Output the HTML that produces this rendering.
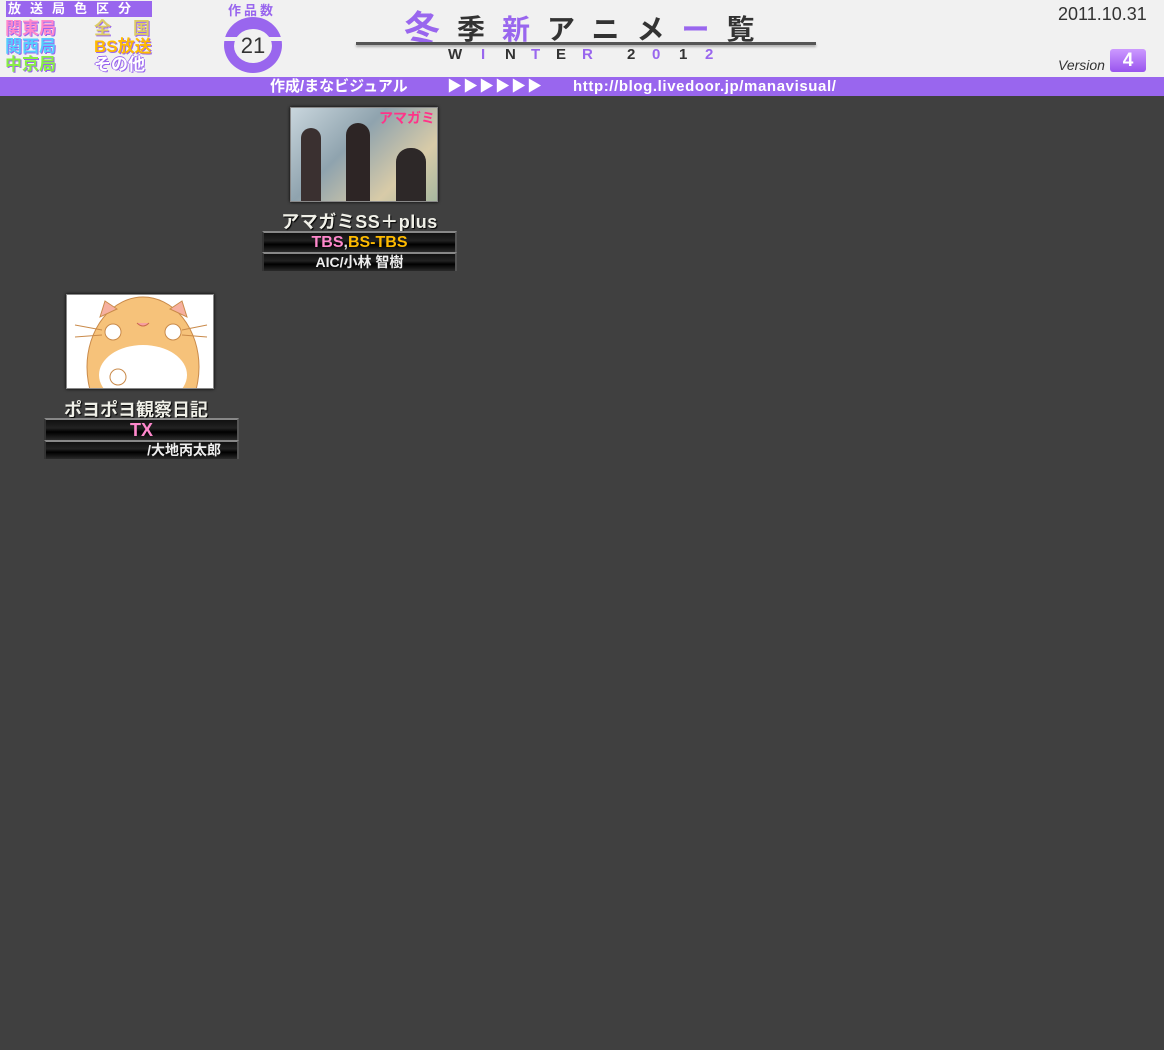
<!DOCTYPE html>
<html><head><meta charset="utf-8"><style>
*{margin:0;padding:0;box-sizing:border-box}
body{width:1164px;height:1050px;background:#404040;position:relative;overflow:hidden;font-family:"Liberation Sans","Noto Sans CJK JP",sans-serif}
.a{position:absolute}
.hdr{left:0;top:0;width:1164px;height:77px;background:#f1f1f1}
.bar{left:0;top:77px;width:1164px;height:19px;background:#9966ee;color:#fff;font-size:15px;font-weight:bold;line-height:19px}
.t{font-weight:bold;white-space:nowrap}
.lg{font-size:17px;line-height:18px;font-weight:bold;white-space:nowrap;position:absolute}
.ttl{position:absolute;color:#f0f0e8;font-weight:bold;font-size:18px;text-align:center;text-shadow:1px 1px 1px #000;white-space:nowrap}
.row{position:absolute;background:linear-gradient(#111,#222 40%,#000 60%,#2a2a2a);border-top:2px solid #888;border-left:2px solid #333;border-right:2px solid #555;text-align:center;font-weight:bold;white-space:nowrap}
.w{position:absolute;top:46px;font-size:15px;font-weight:bold;color:#333}
.p{color:#9966ee}
</style></head><body>
<div class="a hdr"></div>
<div class="a t" style="left:6px;top:1px;width:146px;height:16px;background:#9966ee;color:#fff;font-size:13px;line-height:16px;letter-spacing:9px;padding-left:2px">放送局色区分</div>
<div class="lg" style="left:5px;top:20px;color:#ff88cc;text-shadow:1px 1px 0 #9966ee">関東局</div>
<div class="lg" style="left:5px;top:38px;color:#55ccff;text-shadow:1px 1px 0 #9966ee">関西局</div>
<div class="lg" style="left:5px;top:56px;color:#88ee44;text-shadow:1px 1px 0 #9966ee">中京局</div>
<div class="lg" style="left:94px;top:20px;color:#ddcc66;letter-spacing:22px;text-shadow:1px 1px 0 #9966ee">全国</div>
<div class="lg" style="left:94px;top:38px;color:#ffbb00;text-shadow:1px 1px 0 #9966ee">BS放送</div>
<div class="lg" style="left:94px;top:56px;color:#fff;text-shadow:1px 1px 0 #9966ee,-1px 0 0 #9966ee,0 -1px 0 #9966ee">その他</div>
<div class="a t" style="left:228px;top:0px;font-size:13px;color:#9966ee;letter-spacing:3px">作品数</div>
<div class="a" style="left:224px;top:17px;width:58px;height:56px;border-radius:50%;background:#9966ee"></div>
<div class="a" style="left:218px;top:37px;width:70px;height:4px;background:#f1f1f1"></div>
<div class="a" style="left:234px;top:29px;width:38px;height:34px;border-radius:50%;background:#f1f1f1;text-align:center;font-size:22px;line-height:34px;color:#333">21</div>
<div class="a t" style="left:404px;top:0px;font-size:36px;color:#9966ee">冬</div>
<div class="a t" style="left:457px;top:8px;font-size:28px;color:#333;letter-spacing:17px">季<span class="p">新</span>アニメ<span class="p">ー</span>覧</div>
<div class="a" style="left:356px;top:42px;width:460px;height:3px;background:#555;box-shadow:0 2px 2px #aaa"></div>
<span class="w" style="left:448px">W</span><span class="w p" style="left:481px">I</span><span class="w" style="left:505px">N</span><span class="w p" style="left:531px">T</span><span class="w" style="left:556px">E</span><span class="w p" style="left:582px">R</span><span class="w" style="left:627px">2</span><span class="w p" style="left:652px">0</span><span class="w" style="left:679px">1</span><span class="w p" style="left:705px">2</span>
<div class="a" style="left:1058px;top:4px;font-size:18px;color:#333">2011.10.31</div>
<div class="a" style="left:1058px;top:57px;font-size:14px;font-style:italic;color:#333">Version</div>
<div class="a t" style="left:1110px;top:49px;width:36px;height:23px;background:linear-gradient(#cc99ff,#9955ee);border-radius:3px;color:#fff;font-size:19px;text-align:center;line-height:23px">4</div>
<div class="a bar"><span class="a" style="left:270px">作成/まなビジュアル</span><span class="a" style="left:447px;letter-spacing:1px">▶▶▶▶▶▶</span><span class="a" style="left:573px;letter-spacing:0.6px">http://blog.livedoor.jp/manavisual/</span></div>

<div class="a" style="left:290px;top:107px;width:148px;height:95px;background:linear-gradient(135deg,#c9d6dd,#8fa3ae 40%,#d8cba8 75%,#a7b8a0);border:1px solid #888;box-shadow:0 0 3px #000;overflow:hidden">
<div class="a" style="left:88px;top:0px;color:#ff3388;font-weight:bold;font-size:14px;white-space:nowrap">アマガミ</div>
<div class="a" style="left:10px;top:20px;width:20px;height:75px;background:#3a3030;border-radius:10px 10px 0 0"></div>
<div class="a" style="left:55px;top:15px;width:24px;height:80px;background:#2d2525;border-radius:12px 12px 0 0"></div>
<div class="a" style="left:105px;top:40px;width:30px;height:55px;background:#2d2828;border-radius:14px 14px 0 0"></div>
</div>
<div class="ttl" style="left:262px;top:208px;width:195px;letter-spacing:0.5px">アマガミSS＋plus</div>
<div class="row" style="left:262px;top:231px;width:195px;height:21px;font-size:16px;line-height:19px"><span style="color:#ff88cc">TBS</span><span style="color:#ddd">,</span><span style="color:#ffbb00">BS-TBS</span></div>
<div class="row" style="left:262px;top:252px;width:195px;height:19px;font-size:14px;line-height:17px;color:#eee">AIC/小林 智樹</div>

<div class="a" style="left:66px;top:294px;width:148px;height:95px;background:#fff;border:1px solid #888;box-shadow:0 0 3px #000;overflow:hidden">
<svg width="148" height="95"><ellipse cx="76" cy="72" rx="56" ry="70" fill="#f6c27a" stroke="#c98a4a"/><ellipse cx="76" cy="80" rx="44" ry="30" fill="#fff"/><path d="M33 22 L38 6 L50 14Z M120 22 L115 6 L103 14Z" fill="#f6b0a0" stroke="#c98a4a"/><circle cx="46" cy="37" r="8" fill="#fff" stroke="#c98a4a"/><circle cx="106" cy="37" r="8" fill="#fff" stroke="#c98a4a"/><circle cx="51" cy="82" r="8" fill="#fff" stroke="#c98a4a"/><path d="M8 30 L35 35 M8 42 L35 40 M140 30 L115 35 M140 42 L115 40" stroke="#c98a4a"/><path d="M70 28 Q76 34 82 28" stroke="#c96a4a" fill="#f8a0a0"/></svg>
</div>
<div class="ttl" style="left:44px;top:396px;width:195px;text-align:left;padding-left:20px">ポヨポヨ観察日記</div>
<div class="row" style="left:44px;top:418px;width:195px;height:22px;font-size:18px;line-height:20px;color:#ff88cc">TX</div>
<div class="row" style="left:44px;top:440px;width:195px;height:19px;font-size:14px;line-height:17px;color:#eee;text-align:right;padding-right:16px">/大地丙太郎</div>
</body></html>
